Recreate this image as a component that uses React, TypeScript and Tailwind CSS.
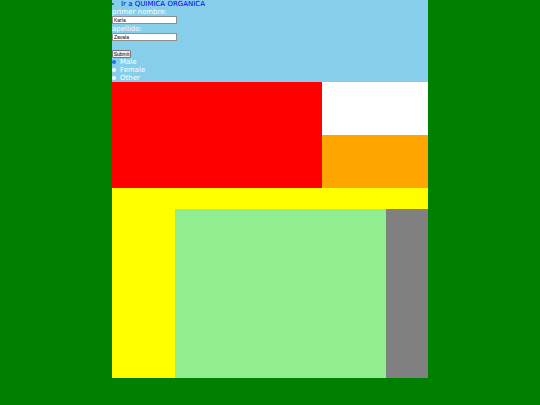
export default function App() {
  const radios = [
    { label: 'Male', checked: true },
    { label: 'Female', checked: false },
    { label: 'Other', checked: false },
  ];

  return (
    <div className="min-h-screen bg-[#008000]">
      <div className="mx-auto w-[316px]">
        {/* cabecera con el formulario */}
        <div className="h-[82px] bg-[#87ceeb] font-['DejaVu_Sans',Verdana,sans-serif] text-[7px] leading-[8px] text-white">
          <div className="flex h-[8px] items-center">
            <span className="mr-[7px] h-[2px] w-[2px] bg-[#2e8b57]" />
            <a href="#" className="text-[#0000ee]">
              Ir a QUIMICA ORGANICA
            </a>
          </div>
          <div className="h-[8px]">primer nombre:</div>
          <div className="h-[9px]">
            <div className="flex h-[8px] w-[65px] items-center border border-[#8f8f8f] bg-white pl-[1px] font-['Liberation_Sans',Arial,sans-serif] text-[5px] leading-[6px] text-black">
              Karla
            </div>
          </div>
          <div className="h-[8px]">apellido:</div>
          <div className="h-[9px]">
            <div className="flex h-[8px] w-[65px] items-center border border-[#8f8f8f] bg-white pl-[1px] font-['Liberation_Sans',Arial,sans-serif] text-[5px] leading-[6px] text-black">
              Zavala
            </div>
          </div>
          <div className="h-[8px]" />
          <div className="h-[8px]">
            <button className="flex h-[8px] w-[19px] items-center justify-center rounded-[1px] border border-[#767676] bg-[#efefef] font-['Liberation_Sans',Arial,sans-serif] text-[5px] leading-[6px] text-black">
              Submit
            </button>
          </div>
          {radios.map((r) => (
            <div key={r.label} className="flex h-[8px] items-center">
              {r.checked ? (
                <span className="mr-[4px] h-[4px] w-[4px] rounded-full bg-[#1a73e8]" />
              ) : (
                <span className="mr-[4px] h-[4px] w-[4px] rounded-full bg-white" />
              )}
              <span>{r.label}</span>
            </div>
          ))}
        </div>

        {/* bloques de colores */}
        <div className="flex h-[106px]">
          <div className="w-[210px] bg-[#ff0000]" />
          <div className="flex flex-1 flex-col">
            <div className="h-[53px] bg-white" />
            <div className="flex-1 bg-[#ffa500]" />
          </div>
        </div>

        <div className="flex h-[190px] bg-[#ffff00] pt-[21px]">
          <div className="w-[63px]" />
          <div className="w-[211px] bg-[#90ee90]" />
          <div className="flex-1 bg-[#808080]" />
        </div>
      </div>
    </div>
  );
}
